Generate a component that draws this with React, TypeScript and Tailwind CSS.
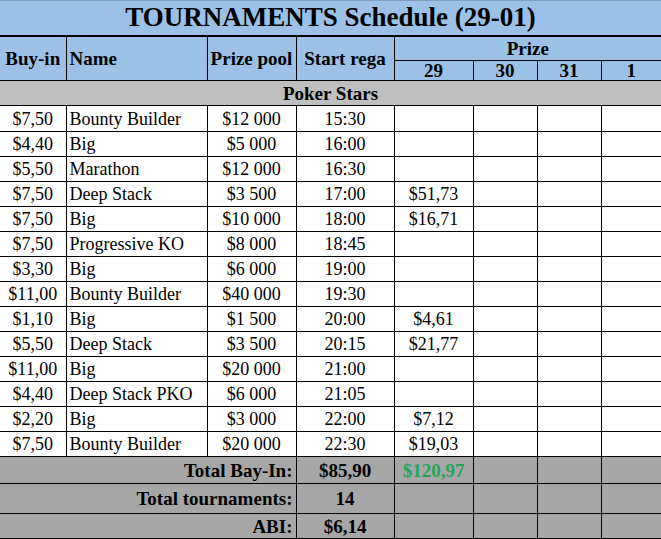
const rows = [
  ['$7,50', 'Bounty Builder', '$12 000', '15:30', ''],
  ['$4,40', 'Big', '$5 000', '16:00', ''],
  ['$5,50', 'Marathon', '$12 000', '16:30', ''],
  ['$7,50', 'Deep Stack', '$3 500', '17:00', '$51,73'],
  ['$7,50', 'Big', '$10 000', '18:00', '$16,71'],
  ['$7,50', 'Progressive KO', '$8 000', '18:45', ''],
  ['$3,30', 'Big', '$6 000', '19:00', ''],
  ['$11,00', 'Bounty Builder', '$40 000', '19:30', ''],
  ['$1,10', 'Big', '$1 500', '20:00', '$4,61'],
  ['$5,50', 'Deep Stack', '$3 500', '20:15', '$21,77'],
  ['$11,00', 'Big', '$20 000', '21:00', ''],
  ['$4,40', 'Deep Stack PKO', '$6 000', '21:05', ''],
  ['$2,20', 'Big', '$3 000', '22:00', '$7,12'],
  ['$7,50', 'Bounty Builder', '$20 000', '22:30', '$19,03'],
];

const totals = [
  { label: 'Total Bay-In:', value: '$85,90', prize: '$120,97', h: 'h-[27px]' },
  { label: 'Total tournaments:', value: '14', prize: '', h: 'h-[30px]' },
  { label: 'ABI:', value: '$6,14', prize: '', h: 'h-[25px]' },
];

const cell = 'border border-black p-0 leading-none';

export default function App() {
  return (
    <div className="w-[661px] h-[539px] overflow-hidden bg-white font-['Liberation_Serif',serif] text-black">
      <table className="w-[661px] table-fixed border-collapse text-[18px]">
        <colgroup>
          <col className="w-[66px]" />
          <col className="w-[141px]" />
          <col className="w-[89px]" />
          <col className="w-[98px]" />
          <col className="w-[79px]" />
          <col className="w-[64px]" />
          <col className="w-[64px]" />
          <col className="w-[60px]" />
        </colgroup>
        <thead>
          <tr className="h-[35px] bg-[#9bc2e6]">
            <th colSpan={8} className="border-t border-t-[#7f9fc0] border-b-2 border-b-black p-0 text-center text-[27px] font-bold leading-none">
              TOURNAMENTS Schedule (29-01)
            </th>
          </tr>
          <tr className="h-[25px] bg-[#9bc2e6] text-[19px] font-bold">
            <th rowSpan={2} className={`${cell} border-l-0 text-center`}>Buy-in</th>
            <th rowSpan={2} className={`${cell} pl-[3px] text-left`}>Name</th>
            <th rowSpan={2} className={`${cell} text-center`}>Prize pool</th>
            <th rowSpan={2} className={`${cell} text-center`}>Start rega</th>
            <th colSpan={4} className={`${cell} border-r-0 text-center align-middle`}>Prize</th>
          </tr>
          <tr className="h-[20px] bg-[#9bc2e6] text-[19px] font-bold">
            <th className={`${cell} text-center`}>29</th>
            <th className={`${cell} text-center`}>30</th>
            <th className={`${cell} text-center`}>31</th>
            <th className={`${cell} border-r-0 text-center`}>1</th>
          </tr>
        </thead>
        <tbody>
          <tr className="h-[25px] bg-[#bfbfbf]">
            <td colSpan={8} className={`${cell} border-x-0 text-center text-[19px] font-bold`}>Poker Stars</td>
          </tr>
          {rows.map((r, i) => (
            <tr key={i} className={i === 0 ? 'h-[26px]' : 'h-[25px]'}>
              <td className={`${cell} border-l-0 text-center`}>{r[0]}</td>
              <td className={`${cell} pl-[3px] text-left`}>{r[1]}</td>
              <td className={`${cell} text-center`}>{r[2]}</td>
              <td className={`${cell} text-center`}>{r[3]}</td>
              <td className={`${cell} text-center`}>{r[4]}</td>
              <td className={cell}></td>
              <td className={cell}></td>
              <td className={`${cell} border-r-0`}></td>
            </tr>
          ))}
          {totals.map((t) => (
            <tr key={t.label} className={`${t.h} bg-[#a6a6a6] text-[19px] font-bold`}>
              <td colSpan={3} className={`${cell} border-l-0 pr-[3px] text-right`}>{t.label}</td>
              <td className={`${cell} text-center`}>{t.value}</td>
              <td className={`${cell} text-center text-[#25a55a]`}>{t.prize}</td>
              <td className={cell}></td>
              <td className={cell}></td>
              <td className={`${cell} border-r-0`}></td>
            </tr>
          ))}
        </tbody>
      </table>
    </div>
  );
}
